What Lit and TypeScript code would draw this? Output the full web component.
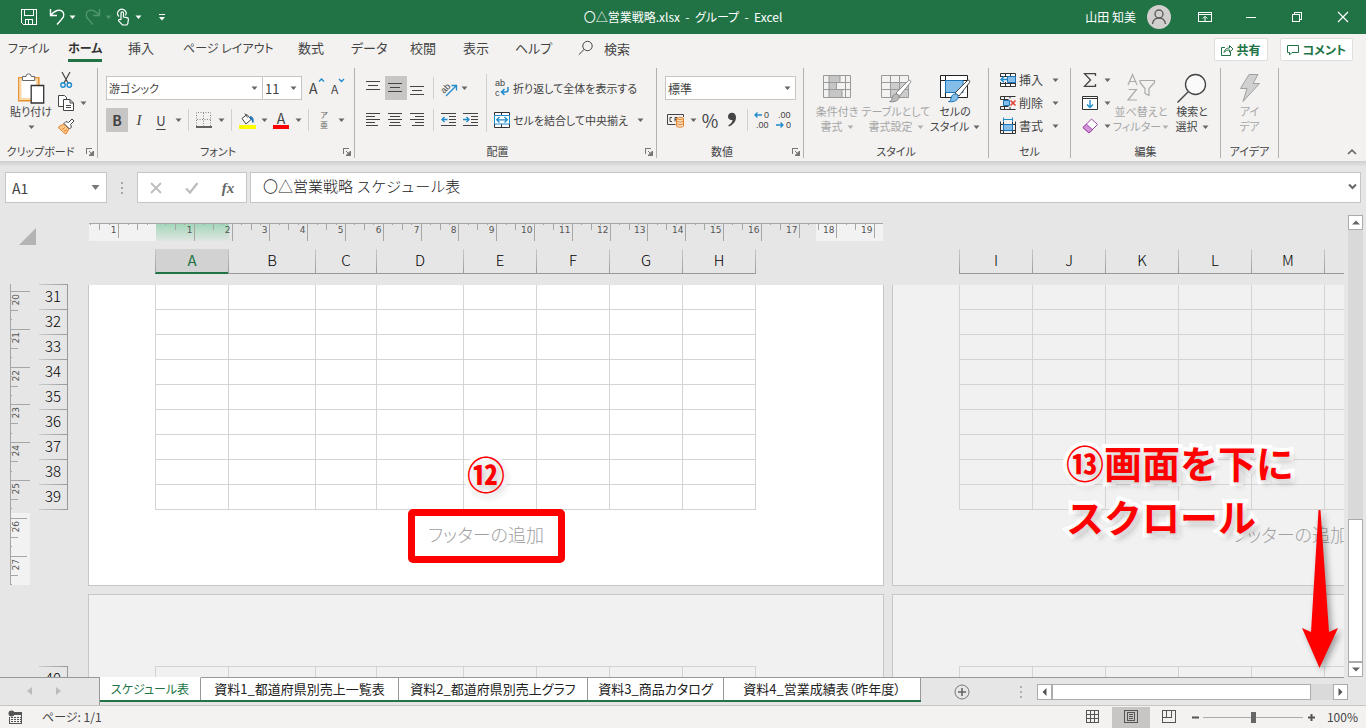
import { LitElement, html, svg, css, nothing, type TemplateResult } from "lit";
import { customElement, property } from "lit/decorators.js";
import { classMap } from "lit/directives/class-map.js";

const icon = (w: number, h: number, body: unknown) => html`<svg
  class="ico" width=${w} height=${h} viewBox="0 0 ${w} ${h}" fill="none" stroke="#444" aria-hidden="true">${body}</svg>`;

const arrow = (color = "#666") => html`<svg class="caret" width="7" height="4" viewBox="0 0 7 4" aria-hidden="true">
  <path d="M0.5 0.5h6L3.5 4z" fill=${color} /></svg>`;

const lines = (rows: [number, number, number][]) =>
  icon(16, 16, svg`<path shape-rendering="crispEdges" d=${rows.map(([x, y, w]) => `M${x} ${y}.5h${w}`).join("")} />`);

const I = {
  save: icon(18, 18, svg`<g stroke="#fff" shape-rendering="crispEdges"><path d="M1.5 1.5h15v15h-13l-2-2z"/><path d="M4.500 1.500v6h9v-6M5.500 16.500v-5h7v5M8.500 12v4" /></g>`),
  undo: icon(18, 18, svg`<path stroke="#fff" stroke-width="1.4" d="M2.500 1v6.500h6.500M3 7C6 3.500 9 2 11.500 2.200c3.500.300 5 3.200 4 6.300-.700 2-3 4-6.500 8"/>`),
  redo: icon(18, 18, svg`<path stroke="#4f9670" stroke-width="1.4" d="M15.500 1v6.500h-6.500M15 7C12 3.500 9 2 6.500 2.200c-3.500.300-5 3.200-4 6.300.700 2 3 4 6.500 8"/>`),
  touch: icon(14, 18, svg`<g stroke="#fff" stroke-width="1.200"><path d="M3 8.500a4.200 4.200 0 1 1 6.500-1"/><path d="M5 11.500V5.200a1.200 1.200 0 0 1 2.500 0V9l3.500.600c1 .2 1.500.9 1.400 1.900l-.600 4-1 1.500H6.500L2.800 13.200c-.900-1 .400-2.200 1.300-1.500z"/></g>`),
  customize: icon(8, 8, svg`<path stroke="#fff" d="M1 1.500h6"/><path stroke="none" fill="#fff" d="M1 4h6L4 7.500z"/>`),
  user: html`<svg width="24" height="24" viewBox="0 0 24 24" aria-hidden="true"><circle cx="12" cy="12" r="12" fill="#d2d0ce"/><g fill="none" stroke="#605e5c" stroke-width="1.400"><circle cx="12" cy="9" r="4"/><path d="M5.500 19c.500-3.500 3-6 6.500-6s6 2.500 6.500 6"/></g></svg>`,
  ribbonOpts: icon(14, 12, svg`<g stroke="#fff" shape-rendering="crispEdges"><path d="M.5 1.500h13v9H.5zM.5 3.500h13"/></g><path stroke="#fff" d="M7 10V5.500M4.800 7.500L7 5.300l2.200 2.200"/>`),
  min: icon(12, 12, svg`<path stroke="#fff" d="M1 6.500h10"/>`),
  restore: icon(12, 12, svg`<path stroke="#fff" shape-rendering="crispEdges" d="M1.500 3.500h7v7h-7zM3.500 3.500v-2h7v7h-2"/>`),
  close: icon(12, 12, svg`<path stroke="#fff" stroke-width="1.200" d="M1 1l10 10M11 1L1 11"/>`),
  search: icon(16, 16, svg`<circle cx="9.500" cy="6" r="4.700"/><path d="M6 9.500L.8 14.700"/>`),
  share: icon(14, 14, svg`<g stroke="#217346"><path d="M5 4.500H1.500v8h9V9"/><path d="M4 9.500c.500-3 2.500-4.500 5.500-4.500V2.500L13 6 9.500 9.200V7C7 7 5.500 7.600 4 9.500z"/></g>`),
  comment: icon(14, 14, svg`<path stroke="#217346" d="M1.500 2.500h11v7H6l-2.500 2.500V9.500h-2z"/>`),
  paste: icon(28, 31, svg`<path fill="#fff" stroke="#e8912d" stroke-width="1.500" d="M1.800 4.800h20v23h-20z"/><path stroke="#fbd9a8" stroke-width="2" d="M3.500 6.500h16.500v19.500H3.500z"/><path fill="#fff" stroke="#666" d="M5.500 7.500v-4h3.500a2.600 2.600 0 0 1 5.200 0h3.500v4z"/><path fill="#fff" stroke="#333" stroke-width="1.300" d="M14.200 12.500h12.500v17.500H14.200z"/>`),
  cut: icon(14, 18, svg`<path stroke-width="1.200" d="M3 1l6 11M11 1L5 12"/><g stroke="#1e8bcd" stroke-width="1.400"><circle cx="4" cy="14" r="2.200"/><circle cx="10.300" cy="14" r="2.200"/></g>`),
  copy: icon(18, 18, svg`<path fill="#fff" d="M1.500 1.500h6l2 2v9h-8z"/><path fill="#fff" d="M6.500 5.500h6.500l3.500 3.500v7.500h-10z"/><path d="M13 5.500v3.500h3.500M9 11.500h5M9 13.500h5"/>`),
  brush: icon(18, 18, svg`<path fill="#fbc98a" stroke="#e8802a" d="M2 9.500l5-2.500 5 5-3 5C5 15.500 4 12 1.500 11z"/><path stroke="#e8802a" d="M5 12.500l3-2M7 14.500l3-2"/><path fill="#fff" d="M7 6.500l2-2 2.500 1L15 2l2 2-3.500 3.500 1 2.500-2 2z"/>`),
  grow: icon(8, 6, svg`<path stroke="#1e8bcd" stroke-width="1.400" d="M1 4.500L3.500 2 6 4.500"/>`),
  shrink: icon(8, 6, svg`<path stroke="#1e8bcd" stroke-width="1.400" d="M1 2l2.500 2.500L6 2"/>`),
  borders: icon(16, 16, svg`<path stroke="#888" stroke-dasharray="1 1.500" d="M.5 14V.5h14V14M7.500 1v13M1 7.500h14"/><path stroke="#333" stroke-width="1.500" d="M0 15h16"/>`),
  fill: icon(17, 17, svg`<path fill="#fff" d="M3 6.500l5-4 4 5-5 4.500z"/><path d="M6 1.500l2.500 4"/><path fill="#1b75bb" stroke="#1b75bb" d="M11.500 4.500c2.500.500 3 3 2.500 6-1-2.500-1.200-3.500-3-4.500z"/><path fill="#ff0" stroke="none" d="M0 13h17v4H0z"/>`),
  top: lines([[0, 1, 14], [2, 5, 10], [0, 9, 14]]),
  mid: lines([[0, 3, 14], [2, 7, 10], [0, 11, 14]]),
  bot: lines([[0, 6, 14], [2, 10, 10], [0, 14, 14]]),
  left: lines([[0, 1, 14], [0, 4, 9], [0, 7, 14], [0, 10, 9], [0, 13, 12]]),
  center: lines([[0, 1, 14], [2, 4, 10], [0, 7, 14], [2, 10, 10], [1, 13, 12]]),
  right: lines([[0, 1, 14], [5, 4, 9], [0, 7, 14], [5, 10, 9], [2, 13, 12]]),
  orient: icon(17, 17, svg`<text x="0" y="11" transform="rotate(-45 5 9)" class="gl">ab</text><path stroke="#1e8bcd" stroke-width="1.300" d="M5 16L15 6M10.500 5.500h5v5"/>`),
  outdent: icon(16, 16, svg`<path d="M0 1.500h15M8 4.500h7M8 7.500h7M8 10.500h7M0 13.500h15"/><path stroke="#1e8bcd" stroke-width="1.300" d="M6.500 7.500H1M3.500 5L1 7.500 3.500 10"/>`),
  indent: icon(16, 16, svg`<path d="M0 1.500h15M8 4.500h7M8 7.500h7M8 10.500h7M0 13.500h15"/><path stroke="#1e8bcd" stroke-width="1.300" d="M0 7.500h5.500M3.500 5L6 7.500 3.500 10"/>`),
  wrap: icon(16, 22, svg`<text x="1" y="9" class="gl">ab</text><text x="1" y="19" class="gl">c</text><path stroke="#1e8bcd" stroke-width="1.500" d="M14 10v3c0 1.500-1 2-2.500 2H8M10.500 12L7.500 15l3 3"/>`),
  merge: icon(16, 16, svg`<path fill="#fff" stroke="#333" d="M.5.5h15v15H.5zM7.500.5v3M7.500 12v3.500"/><path fill="#fff" stroke="#1e8bcd" d="M.5 3.500h15v8.500H.5z"/><path stroke="#1e8bcd" stroke-width="1.300" d="M3 7.800h10M5.500 5L2.700 7.800l2.800 2.700M10.500 5l2.800 2.800-2.800 2.700"/>`),
  currency: icon(18, 16, svg`<path d="M16.500 5V2.500H.5v10h8"/><path d="M5 5.500H3v4h2M8 9.500v-4h2v2H8M13 5.500h2"/><path fill="#fde0bf" stroke="#e8802a" d="M9.500 6.500c0-1.500 7-1.500 7 0v7.500c0 1.500-7 1.500-7 0zM9.500 9c1 1.300 6 1.300 7 0M9.500 11.500c1 1.300 6 1.300 7 0M9.500 6.500c1 1.300 6 1.300 7 0"/>`),
  comma: icon(12, 18, svg`<path stroke="none" fill="#444" d="M2 5.500a3.800 3.800 0 0 1 4-3.800c2.400 0 4 1.800 4 4.500 0 4-2.800 7.500-7 9.300l-.700-1.200c2.500-1.400 4-3.200 4.300-5.300C3.800 9.500 2 8 2 5.500z"/>`),
  decInc: icon(18, 22, svg`<text x="10" y="9" class="gl">0</text><text x="2" y="19" class="gl">.00</text><path stroke="#1e8bcd" stroke-width="1.300" d="M8 6H1M3.500 3.500L1 6l2.500 2.500"/>`),
  decDec: icon(18, 22, svg`<text x="2" y="9" class="gl">.00</text><text x="10" y="19" class="gl">0</text><path stroke="#1e8bcd" stroke-width="1.300" d="M0 16h7M4.500 13.500L7 16l-2.500 2.500"/>`),
  cond: icon(30, 28, svg`<g stroke="#999"><path fill="#f3f2f1" d="M1.500 1.500h27v22h-27z"/><path stroke="none" fill="#c6c6c6" d="M7 2h11v7H7zM7 9h7v7H7zM7 16h13v7H7z"/><path d="M1.500 8.500h27M1.500 15.500h27M7 1.500v22M14.500 8.500v7M18 1.500v7M20 15.500v8M23.500 1.500v22"/></g>`),
  tableFmt: icon(32, 30, svg`<g stroke="#999"><path fill="#f3f2f1" d="M1.500 2.500h27v22h-27z"/><path stroke="none" fill="#cdcdcd" d="M10 10h18v14H10z"/><path d="M1.500 9.500h27M1.500 16.500h27M10.500 2.500v22M19.500 2.500v22"/><path fill="#fff" stroke="#888" d="M16 20L28 8c1.500-1.500 3.500-.500 2.500 1.500L19.500 23z"/><path fill="#bbb" stroke="#888" d="M9.500 28.500c3 0 2-4 4-6.500 2-2 6-.500 5.500 2.500-.500 3.500-5.500 5-9.500 4z"/></g>`),
  cellStyle: icon(32, 30, svg`<path fill="#fff" stroke="#222" d="M1.500 2.500h27v22h-27zM1.500 7.500h27M6.500 2.500v22"/><path fill="#83bde8" stroke="#1b75bb" d="M6.500 7.500h17.500v12H6.500z"/><path fill="#fff" stroke="#444" d="M16 20L28 8c1.500-1.500 3.500-.500 2.500 1.500L20 23z"/><path fill="#83bde8" stroke="#1b75bb" d="M9.500 28.500c3 0 2-4 4-6.500 2-2 6-.500 5.500 2.500-.500 3.500-5.500 5-9.500 4z"/>`),
  insert: icon(17, 16, svg`<path fill="#fff" stroke="#333" d="M.5 1.500h15v13H.5zM5.500 1.500v13M10.500 1.500v13M.5 4.500h15M.5 11.500h15"/><path fill="#83bde8" stroke="#1b75bb" d="M7.500 4.500h8v6h-8z"/><path stroke="#f3f2f1" stroke-width="5" d="M0 7.500h7"/><path stroke="#1e8bcd" stroke-width="1.400" d="M7 7.500H1M4 4.500L1 7.500l3 3"/>`),
  remove: icon(17, 16, svg`<path stroke="#333" d="M.5 1.500h15M.5 14.500h15M.5 4.500h8M.5 11.500h8M4.500 1.500v13M10 1.500v2M10 12v3M.5 1.500v3M.5 11.500v3"/><path fill="#83bde8" stroke="#1b75bb" d="M3.500 5.500h6v5h-6z"/><path stroke="#e03c31" stroke-width="1.500" d="M10.500 5.500l5 5M15.500 5.500l-5 5"/>`),
  format: icon(17, 18, svg`<path stroke="#333" d="M.5 4.500v12h15v-12M3.500 4.500v12M12.500 4.500v12M.5 7.500h15M.5 13.500h15"/><path fill="#83bde8" stroke="#1b75bb" d="M3.500 7.500h9v6h-9z"/><path stroke="#1e8bcd" d="M3.500.5v4M12.500.5v4M3.500 2.500h9"/>`),
  sum: icon(16, 16, svg`<path stroke-width="1.300" d="M13.500 4V1.700H2.500L8.500 8l-6 6.300h11V12"/>`),
  fillDown: icon(17, 16, svg`<path fill="#fff" stroke="#333" d="M.5 1.500h15v13H.5zM.5 3.500h15"/><path stroke="#1e8bcd" stroke-width="1.400" d="M8 5v7M5 9.500L8 12.500l3-3"/>`),
  clear: icon(17, 16, svg`<path fill="#fff" stroke="#9b45a8" d="M1 9.500L9.500 1l6 5.500-8.500 8.500z"/><path fill="#d292d8" stroke="#9b45a8" d="M1 9.500l3.500-3.300 6 5.600-3.500 3.200z"/>`),
  sort: icon(30, 30, svg`<g stroke="#aaa" stroke-width="1.200"><path d="M2 12L6.500 1.500 11 12M3.500 8.500h6M2.500 16.500h8l-8.500 10.500h9"/><path d="M14 7.500h14.500v2l-5.500 6v7l-4-2v-5l-5-6z"/></g>`),
  find: icon(32, 31, svg`<circle cx="19.500" cy="11.500" r="10" fill="#fafafa" stroke-width="1.300"/><path stroke-width="1.400" d="M12 19L1.500 29.500"/>`),
  bolt: icon(24, 30, svg`<path fill="#d0d0d0" stroke="#a0a0a0" d="M11 1.500h9l-5 9h6.500L5 28.500l4-13H2.500z"/>`),
  collapse: icon(10, 8, svg`<path stroke="#666" stroke-width="1.600" d="M1 6l4-3.800L9 6"/>`),
  launcher: icon(9, 9, svg`<path stroke="#777" shape-rendering="crispEdges" d="M1.500 7V1.500H7M4 4l3 3M8.500 4v4.500H4"/><path stroke="none" fill="#777" d="M8 4v4H4z"/>`),
  cancel: icon(12, 12, svg`<path stroke="#bdbdbd" stroke-width="1.800" d="M1 1l10 10M11 1L1 11"/>`),
  accept: icon(14, 12, svg`<path stroke="#bdbdbd" stroke-width="2.200" d="M1 6.500l4 4L12.500 1"/>`),
  chevron: icon(9, 7, svg`<path stroke="#666" stroke-width="2" d="M1 1.500l3.500 3.500L8 1.500"/>`),
  corner: html`<svg width="17" height="17" viewBox="0 0 17 17" aria-hidden="true"><path d="M17 0v17H0z" fill="#b4b4b4"/></svg>`,
  prev: icon(5, 8, svg`<path stroke="none" fill="#bbb" d="M5 0v8L0 4z"/>`),
  next: icon(5, 8, svg`<path stroke="none" fill="#bbb" d="M0 0v8l5-4z"/>`),
  sUp: icon(8, 5, svg`<path stroke="none" fill="#666" d="M0 4.500h8L4 .5z"/>`),
  sDown: icon(8, 5, svg`<path stroke="none" fill="#666" d="M0 .5h8l-4 4z"/>`),
  sLeft: icon(5, 8, svg`<path stroke="none" fill="#555" d="M4.500 0v8L.5 4z"/>`),
  sRight: icon(5, 8, svg`<path stroke="none" fill="#555" d="M.5 0v8l4-4z"/>`),
  add: icon(16, 16, svg`<circle cx="8" cy="8" r="7" stroke="#777"/><path stroke="#666" stroke-width="1.600" d="M8 4v8M4 8h8"/>`),
  macro: icon(14, 14, svg`<path shape-rendering="crispEdges" stroke="#555" d="M6 2.500h7.500v10.500H1.500V7"/><path stroke="none" fill="#555" d="M6 2h8v3H6z"/><circle cx="3.500" cy="3.500" r="3" fill="#555" stroke="none"/><path stroke="#555" stroke-dasharray="2 1" d="M3 7.500h10M3 9.500h10M3 11.500h10"/>`),
  vNormal: icon(14, 14, svg`<path stroke="#555" shape-rendering="crispEdges" d="M.5.5h12v12H.5zM4.500.5v12M8.500.5v12M.5 4.500h12M.5 8.500h12"/>`),
  vLayout: icon(14, 14, svg`<path stroke="#555" shape-rendering="crispEdges" d="M.5.5h13v12H.5zM3.500 2.500h7v8h-7zM5 4.500h4M5 6.500h4M5 8.500h4"/>`),
  vBreak: icon(14, 14, svg`<path stroke="#555" shape-rendering="crispEdges" d="M.5.5h13v12H.5zM4.500.5v7M9.500.5v7M.5 7.500h9"/>`),
};

const base = css`
  * { box-sizing: border-box; }
  button, input, select { font: inherit; color: inherit; background: none; border: 0; padding: 0; margin: 0; outline: 0; border-radius: 0; font-feature-settings: inherit; }
  button { display: flex; align-items: center; justify-content: center; flex: none; cursor: default; white-space: nowrap; }
  svg { flex: none; display: block; overflow: visible; }
`;

@customElement("title-bar")
class TitleBar extends LitElement {
  static styles = [base, css`
    :host { display: grid; grid-template-columns: 1fr auto 1fr; align-items: center; height: 34px; background: #217346; color: #fff; font-size: 12px; line-height: 16px; }
    .quick { display: flex; align-items: center; padding-left: 18px; }
    .quick button { width: 22px; height: 24px; }
    .quick .drop { width: 8px; }
    .quick .wide { width: 28px; }
    .quick .apart { margin-left: 6px; }
    .title { margin: 0; font-size: 12px; font-weight: 400; white-space: pre; }
    .right { display: flex; align-items: center; justify-content: flex-end; }
    .name { margin-right: 11px; }
    .avatar { margin-right: 11px; }
    .win { width: 46px; height: 32px; }
  `];
  render() {
    return html`
      <div class="quick">
        <button aria-label="上書き保存">${I.save}</button>
        <button class="apart" aria-label="元に戻す">${I.undo}</button>
        <button class="drop" aria-label="元に戻す一覧">${arrow("#fff")}</button>
        <button class="apart" aria-label="やり直し">${I.redo}</button>
        <button class="drop" aria-label="やり直し一覧">${arrow("#4f9670")}</button>
        <button aria-label="タッチ/マウス モード">${I.touch}</button>
        <button class="drop" aria-label="モード一覧">${arrow("#fff")}</button>
        <button class="wide apart" aria-label="クイック アクセスのカスタマイズ">${I.customize}</button>
      </div>
      <h1 class="title">〇△営業戦略.xlsx  -  グループ  -  Excel</h1>
      <div class="right">
        <span class="name">山田 知美</span><span class="avatar">${I.user}</span>
        <button class="win" aria-label="リボンの表示オプション">${I.ribbonOpts}</button>
        <button class="win" aria-label="最小化">${I.min}</button>
        <button class="win" aria-label="元に戻す(縮小)">${I.restore}</button>
        <button class="win" aria-label="閉じる">${I.close}</button>
      </div>`;
  }
}

@customElement("ribbon-tabs")
class RibbonTabs extends LitElement {
  static styles = [base, css`
    :host { display: flex; align-items: stretch; height: 32px; padding: 0 13px 0 8px; font-size: 13px; line-height: 18px; }
    nav { display: grid; grid-template-columns: 60px 60px 55px 115px 53px 59px 53px 52px 63px; justify-items: start; align-items: start; }
    .tab { border-bottom: 3px solid transparent; padding-top: 3px; height: 28px; }
    .tab:first-child, .tab:nth-child(4) { font-size: 12px; }
    .active { font-weight: 700; font-size: 12px; border-color: #217346; color: #333; }
    .search { display: flex; align-items: center; gap: 10px; height: 28px; }
    .search input { width: 60px; height: 20px; }
    .search input::placeholder { color: #444; opacity: 1; }
    .actions { margin-left: auto; display: flex; gap: 12px; padding-top: 4px; }
    .action { height: 23px; padding: 0 6px 0 5px; gap: 3px; background: #fff; border: 1px solid #e1dfdd; border-radius: 2px; color: #217346; font-weight: 700; font-size: 12px; }
  `];
  render() {
    const tabs = ["ファイル", "ホーム", "挿入", "ページ レイアウト", "数式", "データ", "校閲", "表示", "ヘルプ"];
    return html`
      <nav>${tabs.map((t) => html`<button class=${classMap({ tab: true, active: t === "ホーム" })}>${t}</button>`)}</nav>
      <label class="search">${I.search}<input type="text" aria-label="検索" placeholder="検索" /></label>
      <div class="actions">
        <button class="action">${I.share}共有</button>
        <button class="action">${I.comment}コメント</button>
      </div>`;
  }
}

@customElement("ribbon-group")
class RibbonGroup extends LitElement {
  @property() label = "";
  @property({ type: Boolean }) launcher = false;
  static styles = [base, css`
    :host { display: flex; flex-direction: column; flex: none; position: relative; border-right: 1px solid #b3b0ad; height: 90px; font-size: 12px; line-height: 15px; }
    .body { display: flex; flex: 1; align-items: flex-start; }
    .foot { display: flex; align-items: center; justify-content: center; height: 15px; margin-bottom: -1px; }
    .name { flex: 1; text-align: center; font-size: 11px; }
    .launch { width: 16px; height: 14px; }
  `];
  render() {
    return html`<div class="body"><slot></slot></div>
      <div class="foot"><span class="name">${this.label}</span>
      ${this.launcher ? html`<button class="launch" aria-label="${this.label}の設定">${I.launcher}</button>` : nothing}</div>`;
  }
}

@customElement("ribbon-bar")
class RibbonBar extends LitElement {
  static styles = [base, css`
    :host { display: flex; padding: 2px 0 3px; font-size: 12px; line-height: 15px; }
    .clip { width: 98px; } .font { width: 257px; } .align { width: 302px; } .num { width: 147px; }
    .style { width: 185px; } .cell { width: 82px; } .edit { width: 150px; } .idea { width: 58px; }
    .gl { font: 9px "Liberation Sans", sans-serif; fill: #444; stroke: none; }
    .rows { display: flex; flex-direction: column; gap: 8px; padding: 8px 0 0 8px; }
    .row { display: flex; align-items: center; height: 24px; }
    .t { width: 22px; height: 24px; }
    .on { background: #c8c6c4; }
    .dd { width: 12px; height: 24px; }
    .dd.sm { width: 8px; }
    .sep { width: 1px; height: 22px; margin: 0 4px; background: #d2d0ce; }
    .tall { width: 1px; height: 58px; margin: 6px 4px 0; background: #d2d0ce; }
    .combo { display: flex; align-items: center; height: 24px; background: #fff; border: 1px solid #c8c6c4; padding-right: 4px; }
    .combo select { appearance: none; flex: 1; min-width: 0; height: 20px; padding-left: 2px; }
    .family { width: 157px; font-size: 11px; } .size { width: 40px; margin-left: -1px; margin-right: 4px; font-size: 13px; } .format { width: 131px; }
    .stack { display: flex; flex-direction: column; padding-left: 8px; }
    .stack .row { height: 23px; }
    .stack .t, .stack .dd { height: 22px; }
    .stack.near { padding-left: 1px; }
    .big { flex-direction: column; justify-content: flex-start; align-items: center; padding-top: 4px; font-size: 11px; }
    .pic { display: flex; align-items: center; justify-content: center; height: 32px; }
    .line { display: flex; align-items: center; gap: 4px; height: 15px; }
    .w54 .line { gap: 1px; }
    .w46 { width: 46px; } .w50 { width: 50px; } .w54 { width: 56px; } .w58 { width: 57px; } .w68 { width: 68px; }
    .first { margin-left: 8px; }
    .off { color: #a6a6a6; }
    .txt { gap: 0; height: 22px; }
    .txt .slot { width: 22px; display: flex; justify-content: center; }
    .txt .caret { margin-left: 9px; }
    .rows.text { padding-left: 0; font-size: 11px; }
    .bold { font-weight: 700; font-size: 14px; } .ital { font-style: italic; font-family: "Liberation Serif", serif; font-size: 15px; }
    .under { text-decoration: underline; text-underline-offset: 3px; font-size: 13px; }
    .ga { align-items: center; justify-content: flex-start; padding-left: 3px; font-size: 14px; }
    .ga svg { align-self: flex-start; margin-top: 1px; }
    .gs { font-size: 12px; }
    .fc { display: flex; flex-direction: column; width: 16px; align-items: center; line-height: 12px; font-size: 14px; border-bottom: 4px solid #f00; padding-bottom: 1px; }
    .ruby { display: flex; flex-direction: column; line-height: 10px; font-size: 8px; align-items: center; color: #666; }
    .pct { font-size: 18px; }
    .fold { margin-left: auto; align-self: flex-end; width: 28px; height: 12px; }
  `];
  private tool(label: string, body: unknown, cls = "") {
    return html`<button class="t ${cls}" aria-label=${label}>${body}</button>`;
  }
  private drop(cls = "") {
    return html`<button class="dd ${cls}" aria-label="一覧">${arrow()}</button>`;
  }
  private big(pic: TemplateResult, l1: string, l2: string, cls: string, dd = true, color = "#666") {
    return html`<button class="big ${cls}"><span class="pic">${pic}</span><span class="line">${l1}</span><span class="line">${l2}${dd ? arrow(color) : nothing}</span></button>`;
  }
  private text(pic: TemplateResult, label: string, dd = true) {
    return html`<button class="txt"><span class="slot">${pic}</span>${label}${dd ? arrow() : nothing}</button>`;
  }
  render() {
    const sep = html`<span class="sep"></span>`;
    return html`
      <ribbon-group class="clip" label="クリップボード" launcher>
        ${this.big(I.paste, "貼り付け", "", "w46 first")}
        <div class="stack near">
          <div class="row">${this.tool("切り取り", I.cut)}</div>
          <div class="row">${this.tool("コピー", I.copy)}${this.drop()}</div>
          <div class="row">${this.tool("書式のコピー", I.brush)}</div>
        </div>
      </ribbon-group>
      <ribbon-group class="font" label="フォント" launcher>
        <div class="rows">
          <div class="row">
            <span class="combo family"><select aria-label="フォント"><option>游ゴシック</option></select>${arrow()}</span>
            <span class="combo size"><select aria-label="フォント サイズ"><option>11</option></select>${arrow()}</span>
            ${this.tool("フォント サイズの拡大", html`A${I.grow}`, "ga")}
            ${this.tool("フォント サイズの縮小", html`A${I.shrink}`, "ga gs")}
          </div>
          <div class="row">
            ${this.tool("太字", "B", "on bold")}${this.tool("斜体", "I", "ital")}${this.tool("下線", "U", "under")}${this.drop()}${sep}
            ${this.tool("罫線", I.borders)}${this.drop()}${sep}
            ${this.tool("塗りつぶしの色", I.fill)}${this.drop()}
            ${this.tool("フォントの色", html`<span class="fc">A</span>`)}${this.drop()}${sep}
            ${this.tool("ふりがな", html`<span class="ruby"><span>ア</span><span>亜</span></span>`)}${this.drop()}
          </div>
        </div>
      </ribbon-group>
      <ribbon-group class="align" label="配置" launcher>
        <div class="rows">
          <div class="row">${this.tool("上揃え", I.top)}${this.tool("上下中央揃え", I.mid, "on")}${this.tool("下揃え", I.bot)}${sep}${this.tool("方向", I.orient)}${this.drop("sm")}</div>
          <div class="row">${this.tool("左揃え", I.left)}${this.tool("中央揃え", I.center)}${this.tool("右揃え", I.right)}${sep}${this.tool("インデントを減らす", I.outdent)}${this.tool("インデントを増やす", I.indent)}</div>
        </div>
        <span class="tall"></span>
        <div class="rows text">
          <div class="row">${this.text(I.wrap, "折り返して全体を表示する", false)}</div>
          <div class="row">${this.text(I.merge, "セルを結合して中央揃え")}</div>
        </div>
      </ribbon-group>
      <ribbon-group class="num" label="数値" launcher>
        <div class="rows">
          <div class="row"><span class="combo format"><select aria-label="数値の書式"><option>標準</option></select>${arrow()}</span></div>
          <div class="row">
            ${this.tool("通貨表示形式", I.currency)}${this.drop()}${this.tool("パーセント スタイル", "%", "pct")}${this.tool("桁区切りスタイル", I.comma)}${sep}
            ${this.tool("小数点以下の表示桁数を増やす", I.decInc)}${this.tool("小数点以下の表示桁数を減らす", I.decDec)}
          </div>
        </div>
      </ribbon-group>
      <ribbon-group class="style" label="スタイル">
        ${this.big(I.cond, "条件付き", "書式", "w50 first off", true, "#b0b0b0")}
        ${this.big(I.tableFmt, "テーブルとして", "書式設定", "w68 off", true, "#b0b0b0")}
        ${this.big(I.cellStyle, "セルの", "スタイル", "w50")}
      </ribbon-group>
      <ribbon-group class="cell" label="セル">
        <div class="stack">
          <div class="row">${this.text(I.insert, "挿入")}</div>
          <div class="row">${this.text(I.remove, "削除")}</div>
          <div class="row">${this.text(I.format, "書式")}</div>
        </div>
      </ribbon-group>
      <ribbon-group class="edit" label="編集">
        <div class="stack">
          <div class="row">${this.tool("オート SUM", I.sum)}${this.drop()}</div>
          <div class="row">${this.tool("フィル", I.fillDown)}${this.drop()}</div>
          <div class="row">${this.tool("クリア", I.clear)}${this.drop()}</div>
        </div>
        ${this.big(I.sort, "並べ替えと", "フィルター", "w54 off", true, "#b0b0b0")}
        ${this.big(I.find, "検索と", "選択", "w46")}
      </ribbon-group>
      <ribbon-group class="idea" label="アイデア">
        ${this.big(I.bolt, "アイ", "デア", "w58 off", false)}
      </ribbon-group>
      <button class="fold" aria-label="リボンを折りたたむ">${I.collapse}</button>`;
  }
}

@customElement("formula-bar")
class FormulaBar extends LitElement {
  static styles = [base, css`
    :host { display: flex; padding: 6px 5px 0; font-size: 14px; line-height: 20px; color: #444; }
    .box { display: flex; align-items: center; height: 31px; background: #fff; border: 1px solid #c6c6c6; }
    .ref { width: 102px; padding: 0 6px; }
    .ref input { flex: 1; min-width: 0; }
    .dots { width: 30px; display: flex; flex-direction: column; align-items: center; justify-content: center; gap: 3px; }
    .dots i { width: 2px; height: 2px; background: #a6a6a6; }
    .tools { width: 110px; margin-right: 3px; }
    .tools button { width: 36px; height: 28px; }
    .fx { font-family: "Liberation Serif", serif; font-style: italic; font-weight: 700; font-size: 15px; color: #666; }
    .formula { flex: 1; padding: 0 3px 3px 12px; font-size: 15px; font-weight: 300; font-feature-settings: normal; color: #222; }
    .formula input { flex: 1; min-width: 0; }
  `];
  render() {
    return html`
      <div class="box ref"><input type="text" aria-label="名前ボックス" .value=${"A1"} /><button aria-label="名前一覧">${icon(9, 5, svg`<path stroke="none" fill="#777" d="M.5 0h8l-4 5z"/>`)}</button></div>
      <div class="dots"><i></i><i></i><i></i></div>
      <div class="box tools"><button aria-label="キャンセル">${I.cancel}</button><button aria-label="入力">${I.accept}</button><button class="fx" aria-label="関数の挿入">fx</button></div>
      <div class="box formula"><input type="text" aria-label="数式バー" .value=${"〇△営業戦略 スケジュール表"} /><button aria-label="数式バーの展開">${I.chevron}</button></div>`;
  }
}

const PAGES = [
  [["A", 73], ["B", 87], ["C", 61], ["D", 87], ["E", 73], ["F", 73], ["G", 73], ["H", 73]],
  [["I", 73], ["J", 73], ["K", 73], ["L", 73], ["M", 73], ["N", 73]],
] as [string, number][][];

const CM = 37.8;

@customElement("sheet-view")
class SheetView extends LitElement {
  static styles = [base, css`
    :host { display: flex; flex: 1; min-height: 0; font-size: 15px; line-height: 20px; }
    .view { flex: 1; min-width: 0; overflow: hidden; position: relative; display: grid; grid-template-columns: 88px minmax(0, 1fr); grid-template-rows: 18px 25px minmax(0, 1fr); padding-top: 20px; row-gap: 8px; }
    .corner { grid-row: 1 / 3; padding: 5px 0 0 19px; }
    .ruler { padding-left: 1px; }
    .rt { font: 9px "DejaVu Sans", sans-serif; fill: #555; }
    .heads { display: flex; gap: 203px; padding-left: 67px; overflow: hidden; font-weight: 300; }
    .set { display: flex; flex: none; border-bottom: 1px solid #999; color: #000; }
    .h { flex: none; text-align: center; padding-top: 1px; border-left: 1px solid; border-image: linear-gradient(#ccc, #999) 1; }
    .set .h:last-child { border-right: 1px solid; }
    .sel { background: #d2d2d2; color: #217346; font-weight: 400; box-shadow: inset 0 -1px #217346, 0 1px #217346; }
    .side { display: flex; padding-left: 10px; overflow: hidden; margin-top: 2px; }
    .nums { margin-left: 9px; width: 29px; color: #000; font-weight: 300; }
    .n { height: 25px; text-align: center; padding-top: 2px; background: linear-gradient(90deg, #ccc, #999) 0 0 / 100% 1px no-repeat; border-right: 1px solid #999; }
    .end { height: 1px; background: linear-gradient(90deg, #ccc, #999); margin-bottom: 156px; }
    .pages { display: grid; grid-template-columns: 796px 796px; gap: 8px; align-content: start; overflow: hidden; margin-top: 3px; }
    .page { position: relative; border: 1px solid #c6c6c6; background: #f1f1f1; padding-left: 66px; }
    .upper { border-top: 0; }
    .now { background: #fff; }
    .next { padding-top: 71px; }
    table { table-layout: fixed; border-collapse: separate; border-spacing: 0; border-left: 1px solid #d4d4d4; }
    .next table { border-top: 1px solid #d4d4d4; }
    td { height: 25px; padding: 0; border-right: 1px solid #d4d4d4; border-bottom: 1px solid #d4d4d4; }
    .footer { height: 75px; margin-left: -66px; padding-top: 11px; text-align: center; color: #a0a0a0; font-weight: 300; font-size: 18px; line-height: 26px; }
    .frame { position: absolute; left: 319px; bottom: 22px; width: 157px; height: 54px; border: 7px solid #f00; border-radius: 5px; }
    .note { position: absolute; margin: 0; color: #f00; font-weight: 700; font-size: 38px; line-height: 54px; -webkit-text-stroke: 8px #fff; paint-order: stroke fill; text-shadow: 3px 4px 6px rgba(0, 0, 0, 0.25); white-space: nowrap; font-feature-settings: normal; stroke-linejoin: round; }
    .n12 { left: 378px; bottom: 85px; }
    .n13 { right: 50px; top: 232px; }
    .arrow { position: absolute; right: 4px; top: 305px; filter: drop-shadow(3px 3px 3px rgba(0, 0, 0, 0.35)); }
    .scroll { width: 15px; margin: 12px 3px 0 4px; display: flex; flex-direction: column; background: #d9d9d9; }
    .scroll button { height: 15px; background: #fff; border: 1px solid #ababab; }
    .before { flex: 290; } .thumb { flex: 142; background: #fff; border: 1px solid #ababab; }
  `];

  private hRuler() {
    const marks: unknown[] = [];
    for (let q = -7; q <= 77; q++) {
      const x = Math.round(66.5 + (q * CM) / 4 + 0.5) + 0.5;
      const n = q / 4;
      if (q === 0 || x > 794) continue;
      const full = Number.isInteger(n);
      const h = full ? (n < 0 || n > 16 ? 15 : 18) : q % 2 === 0 ? 7 : 2;
      marks.push(svg`<path stroke="#a6a6a6" d="M${x} 0v${h}"/>`);
      if (full) marks.push(svg`<text class="rt" x=${x - 2} y="10" text-anchor="end">${Math.abs(n)}</text>`);
    }
    return html`<svg width="794" height="18" viewBox="0 0 794 18" role="img" aria-label="水平ルーラー">
      <defs><linearGradient id="g" x2="0" y2="1"><stop stop-color="#9fd5b7"/><stop offset="1" stop-color="#e0e6e2"/></linearGradient></defs>
      <path fill="#f2f2f2" d="M0 0h67v18H0zM727 0h67v18h-67z"/><path fill="url(#g)" d="M67 0h73v18H67z"/>
      <path stroke="#a6a6a6" d="M0 .5h794"/>${marks}</svg>`;
  }
  private vRuler() {
    const marks: unknown[] = [];
    for (let q = 80; q <= 111; q++) {
      const y = Math.round(7 + ((q - 80) * CM) / 4) + 0.5;
      if (y > 301) continue;
      const full = q % 4 === 0;
      const w = full ? (q >= 104 ? 17 : 20) : q % 2 === 0 ? 8 : 2;
      marks.push(svg`<path stroke="#a6a6a6" d="M0 ${y}h${w}"/>`);
      if (full) marks.push(svg`<text class="rt" transform="translate(9 ${y + 14}) rotate(-90)">${q / 4}</text>`);
    }
    return html`<svg width="20" height="301" viewBox="0 0 20 301" role="img" aria-label="垂直ルーラー">
      <path fill="#f2f2f2" d="M0 229h20v72H0z"/><path stroke="#a6a6a6" d="M.5 0v301"/>${marks}</svg>`;
  }
  private cells(cols: [string, number][], first: number, rows: number) {
    const total = cols.reduce((s, c) => s + c[1], 1);
    return html`<table style="width:${total}px" aria-label="${cols[0][0]}${first} からのセル">
      <colgroup>${cols.map((c) => html`<col style="width:${c[1]}px" />`)}</colgroup>
      <tbody>${Array.from({ length: rows }, () => html`<tr>${cols.map(() => html`<td></td>`)}</tr>`)}</tbody></table>`;
  }
  render() {
    return html`
      <div class="view">
        <div class="corner">${I.corner}</div>
        <div class="ruler">${this.hRuler()}</div>
        <div class="heads">${PAGES.map((cols) => html`<div class="set">${cols.map(([c, w], i) => html`<span
          class=${classMap({ h: true, sel: c === "A" })} style="width:${w + (i === cols.length - 1 ? 1 : 0)}px">${c}</span>`)}</div>`)}</div>
        <div class="side">${this.vRuler()}
          <div class="nums">${[31, 32, 33, 34, 35, 36, 37, 38, 39].map((n) => html`<div class="n">${n}</div>`)}<div class="end"></div><div class="n">40</div></div>
        </div>
        <div class="pages">
          <div class="page upper now">${this.cells(PAGES[0], 31, 9)}<div class="footer">フッターの追加</div>
            <div class="frame"></div><p class="note n12">⑫</p></div>
          <div class="page upper">${this.cells(PAGES[1], 31, 9)}<div class="footer">フッターの追加</div></div>
          <div class="page next">${this.cells(PAGES[0], 40, 3)}</div>
          <div class="page next">${this.cells(PAGES[1], 40, 3)}</div>
        </div>
        <p class="note n13">⑬画面を下に<br />スクロール</p>
        <svg class="arrow" width="40" height="162" viewBox="0 0 40 162" aria-hidden="true"><path fill="#f00" d="M18.500 2h2L29 124l9-4-18.500 40L2 120l9 4z"/></svg>
      </div>
      <div class="scroll">
        <button aria-label="上へスクロール">${I.sUp}</button><div class="before"></div><div class="thumb"></div><button aria-label="下へスクロール">${I.sDown}</button>
      </div>`;
  }
}

const SHEETS: [string, number][] = [
  ["スケジュール表", 101], ["資料1_都道府県別売上一覧表", 198], ["資料2_都道府県別売上グラフ", 189],
  ["資料3_商品カタログ", 136], ["資料4_営業成績表（昨年度）", 197],
];

@customElement("sheet-tabs")
class SheetTabs extends LitElement {
  static styles = [base, css`
    :host { display: flex; height: 28px; font-size: 12px; line-height: 16px; color: #222; }
    .nav { width: 100px; display: flex; align-items: flex-start; padding: 9px 0 0 27px; gap: 24px; border-top: 1px solid #999; border-right: 1px solid #999; }
    .tabs { display: flex; height: 25px; border-bottom: 2px solid #217346; background: #fff; }
    .tab { border-top: 1px solid #999; border-right: 1px solid #999; font-size: 13px; }
    .active { color: #217346; border-top-color: #fff; font-size: 12px; }
    .rest { flex: 1; display: flex; border-top: 1px solid #999; margin-right: 22px; padding-top: 6px; align-items: flex-start; }
    .add { width: 16px; height: 16px; margin-left: 33px; }
    .dots { margin-left: auto; display: flex; flex-direction: column; gap: 3px; padding: 2px 15px 0 0; }
    .dots i { width: 2px; height: 2px; background: #b0b0b0; }
    .h { width: 311px; height: 16px; display: flex; background: #dadada; margin-right: -4px; }
    .h button { width: 15px; background: #fff; border: 1px solid #ababab; }
    .thumb { flex: 258; background: #fff; border: 1px solid #ababab; }
    .after { flex: 22; }
  `];
  render() {
    return html`
      <div class="nav"><button aria-label="前のシート">${I.prev}</button><button aria-label="次のシート">${I.next}</button></div>
      <div class="tabs">${SHEETS.map(([t, w], i) => html`<button class=${classMap({ tab: true, active: i === 0 })} style="width:${w}px">${t}</button>`)}</div>
      <div class="rest">
        <button class="add" aria-label="新しいシート">${I.add}</button>
        <div class="dots"><i></i><i></i><i></i></div>
        <div class="h"><button aria-label="左へスクロール">${I.sLeft}</button><div class="thumb"></div><div class="after"></div><button aria-label="右へスクロール">${I.sRight}</button></div>
      </div>`;
  }
}

@customElement("status-bar")
class StatusBar extends LitElement {
  static styles = [base, css`
    :host { display: flex; align-items: center; height: 22px; padding: 0 8px; background: #f3f2f1; border-top: 1px solid #c6c6c6; font-size: 12px; line-height: 16px; color: #444; }
    .page { margin-left: 20px; }
    .views { margin-left: auto; display: flex; }
    .views button { width: 38px; height: 21px; }
    .views .on { background: #c8c6c4; }
    .sign { width: 14px; height: 16px; }
    input { appearance: none; width: 100px; height: 12px; margin: 0 1px; background: linear-gradient(#aaa, #aaa) 0 50% / 100% 1px no-repeat; }
    input::-webkit-slider-thumb { appearance: none; width: 5px; height: 11px; background: #666; }
    .pct { width: 40px; text-align: right; }
  `];
  render() {
    return html`${I.macro}<span class="page">ページ: 1/1</span>
      <div class="views"><button aria-label="標準">${I.vNormal}</button><button class="on" aria-label="ページ レイアウト">${I.vLayout}</button><button aria-label="改ページ プレビュー">${I.vBreak}</button></div>
      <button class="sign" aria-label="縮小">${icon(7, 7, svg`<path stroke="#555" stroke-width="2" d="M0 3.500h7"/>`)}</button>
      <input type="range" min="0" max="100" .value=${"50"} aria-label="ズーム" />
      <button class="sign" aria-label="拡大">${icon(7, 7, svg`<path stroke="#555" stroke-width="2" d="M0 3.500h7M3.500 0v7"/>`)}</button>
      <span class="pct">100%</span>`;
  }
}

@customElement("app-root")
class AppRoot extends LitElement {
  static styles = css`
    :host { display: flex; flex-direction: column; height: 100vh; overflow: hidden; background: #e6e6e6; color: #444; font-family: "Noto Sans CJK JP", "Noto Sans", sans-serif; font-feature-settings: "palt"; }
    .ribbon { background: #f3f2f1; }
    .shade { height: 5px; background: linear-gradient(#cfcfcf, #e2e2e2); }
  `;
  render() {
    return html`<title-bar></title-bar>
      <div class="ribbon"><ribbon-tabs></ribbon-tabs><ribbon-bar></ribbon-bar></div>
      <div class="shade"></div>
      <formula-bar></formula-bar>
      <sheet-view></sheet-view>
      <sheet-tabs></sheet-tabs>
      <status-bar></status-bar>`;
  }
}
